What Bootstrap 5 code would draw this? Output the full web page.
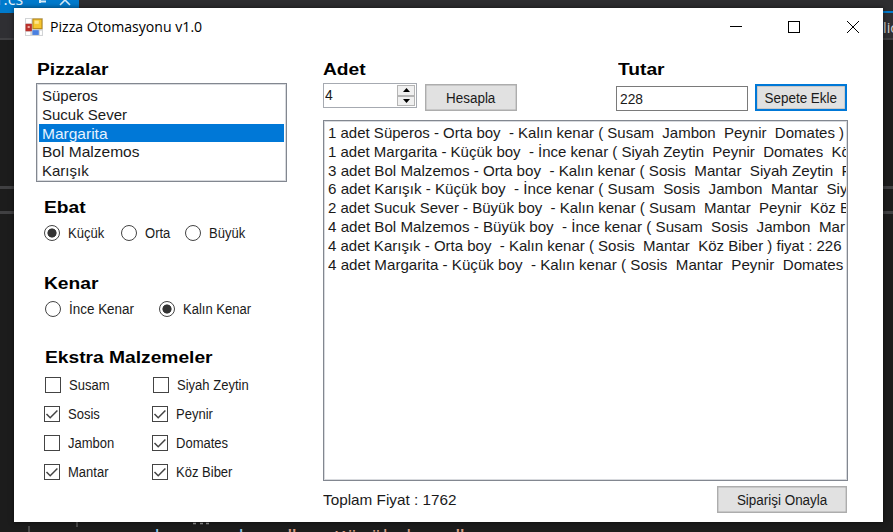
<!DOCTYPE html>
<html lang="tr">
<head>
<meta charset="utf-8">
<title>Pizza Otomasyonu v1.0</title>
<link href="https://cdn.jsdelivr.net/npm/bootstrap@5.3.0/dist/css/bootstrap.min.css" rel="stylesheet">
<style>
body{width:893px;height:532px;background:#1c1c1c;font-family:"Liberation Sans",Arial,sans-serif;font-size:14px;line-height:1;color:#1a1a1a;overflow:hidden}
/* editor behind the window */
.ide{inset:0;overflow:hidden}
.ide-top{height:11px;background:#2d2d30}
.ide-bar{height:27px;background:#2f2f33;border-top:2px solid #007acc;color:#d0d0d0;padding-left:883px;overflow:hidden}
.ide-bar span{font:14.5px/29px "Open Sans",sans-serif}
.ide-rule{height:2px;background:#3f3f42}
.ide-split{height:3px;background:#404042}
.gap-a{height:146px}.gap-b{height:22px}
.ide-tab{left:0;top:0;width:79px;height:13px;background:#007acc;color:#e8f3fb;font:16px/1 "Open Sans",sans-serif}
.ide-tab span{left:-3px;top:-9px}
.ide-tab svg{left:36px;top:0}
.code{left:154px;top:528px;font:20px/22px "Liberation Mono",monospace;color:#8fc8ea;white-space:pre}
.code .str{color:#d69d85}
.guides{left:0;top:522px}
/* window */
.win{left:14px;top:8px;width:869px;height:514px;background:#fff;box-shadow:0 0 5px rgba(0,0,0,.6)}
.title-bar{height:38px;padding:0 24px 0 11px}
.title-txt{font:14.5px/36px "Open Sans","Noto Sans",sans-serif;color:#000;margin-left:7px}
.tx{display:inline-block;white-space:pre;transform-origin:0 50%;transform:scaleX(.93)}
.btn .tx{transform-origin:50% 50%;transform:scaleX(.96)}
.ttl{transform:scaleX(.972)}
.hd{font-weight:700;font-size:16px;line-height:27px;height:26px;margin:0;color:#000}
.hd .tx{transform:scaleX(1.2)}
.left-col{width:286px;padding:10px 0 0 22px}
.left-col .hd.first{padding-left:1px}
.right-col{width:526px;padding-top:10px;margin-left:23px}
.lbox{border:1px solid #828790;box-shadow:inset 0 0 0 1px #d8dade;background:#fff;border-radius:0;overflow:hidden}
.lbox .list-group-item{border:0;margin:0;padding:0 0 0 3px;height:18.8px;line-height:20px;font-size:15px;color:#1a1a1a;background:transparent;white-space:pre;overflow-x:clip}
.lbox .list-group-item.active{background:#0078d7;color:#e6f2ff;margin:0}
.pizza{width:251px;height:99px;padding:2px 2px 0;margin-top:1px}
.orders{width:525px;height:361px;padding:2px 1px 0 1px;margin-top:9px}
.pizza .tx,.orders .tx{transform:none}
.pizza .wide .tx{transform:scaleX(1.035)}
.orders .wide .tx{transform:scaleX(1.01)}
.grp{padding:12px 0 0 8px}
.opt{height:20px;margin-top:3px}
.hd-kenar{margin-top:27px}.hd-extra{margin-top:25px}
.opt .form-check-input,.opt-c .form-check-input{width:16px;height:16px;margin:0;border:1px solid #444;box-shadow:none;background-color:#fff;flex:none}
.opt .form-check-input:checked{background-image:radial-gradient(circle,#333 0 4.2px,transparent 4.9px);background-size:auto}
.opt-c .form-check-input{border-radius:0}
.opt-c .form-check-input:checked{background-image:url("data:image/svg+xml,%3csvg xmlns='http://www.w3.org/2000/svg' viewBox='0 0 14 14'%3e%3cpath fill='none' stroke='%23444' stroke-width='1.5' d='M1.5 7l3.7 3.7L12.4 3.5'/%3e%3c/svg%3e")}
.opt label,.opt-c label{margin-left:8px;line-height:20px}
.o1{width:77px}.o2{width:64px}.o3{width:70px}.k1{width:114px}
.k1 .tx{transform:scaleX(.96)}
.extras{display:grid;grid-template-columns:107.5px 110px;grid-auto-rows:28.8px;margin-top:1px}
.shift{padding-left:1px}
.heads .hd:first-child{width:295px}
.controls{height:29px}
.wbtn{border:1px solid #adadad;border-radius:0;background:#e1e1e1;color:#1a1a1a;padding:0;font-size:14px;line-height:26px;height:27px;width:92px;box-shadow:inset 0 0 0 .4px #adadad}
.wbtn.focus-btn{border:2px solid #0078d7;line-height:24px;margin-left:7px}
.wbtn.calc{margin-left:8px}
.wbtn.confirm{width:130px}
.spin{width:94px;height:25px;border:1px solid #a6aab1;padding:1px;margin-top:1px}
.spin .tx{line-height:20px;font-size:15px}
.spin-b{width:18px;height:10.5px;background:#f0f0f0;border:1px solid #b5b5b5}
.tbox{width:132px;height:25px;border:1px solid #7a7a7a;padding-left:3px;line-height:23px;font-size:15px;margin-left:99px}
.tbox .tx{transform:scaleX(.92)}
.foot{width:524px;padding-top:5px}
.total{font-size:15px;line-height:27px;transform:scaleX(1.02)}
</style>
</head>
<body>
<div class="ide position-absolute">
  <div class="ide-top"></div>
  <div class="ide-bar"><span>lic</span></div>
  <div class="ide-rule"></div>
  <div class="gap-a"></div><div class="ide-split"></div>
  <div class="gap-b"></div><div class="ide-split"></div>
  <div class="ide-tab position-absolute overflow-hidden"><span class="position-absolute">r.cs</span>
    <svg class="position-absolute" width="40" height="6"><path d="M4 0v3M4 1.5h6" stroke="#d6eaf7" stroke-width="2"/><path d="M24 5l5-5 5 5" fill="none" stroke="#d6eaf7" stroke-width="1.6"/></svg>
  </div>
  <svg class="guides position-absolute" width="220" height="10"><path d="M29 4v6M77 0v5" stroke="#777" stroke-width="1"/><path d="M193 1.500h3M200 1.500h3M206 1.500h3" stroke="#999" stroke-width="1.500"/></svg>
  <div class="code position-absolute">kenar_ek = <span class="str">" - Küçük boy "</span></div>
</div>

<main class="win position-absolute d-flex flex-column">
  <header class="title-bar d-flex align-items-center">
    <svg width="18" height="18" viewBox="0 0 17 17"><rect width="17" height="17" fill="#d2d4d6"/><path d="M1 1h5v4H1zM1 13h4v3H1z" fill="#fff"/><rect x=".5" y="5.500" width="6" height="7" fill="#b92f2a"/><rect x="2.500" y="7.500" width="2" height="2" fill="#f0a8a0"/><rect x="7.500" y="1" width="8.500" height="9" fill="#f5c52f" stroke="#b98a16"/><rect x="9" y="2.500" width="4" height="3" fill="#fde48a"/><rect x="7" y="11.500" width="6" height="4.500" fill="#4a80e0"/><path d="M14 12h2v4h-2z" fill="#fff"/></svg>
    <span class="title-txt tx ttl me-auto">Pizza Otomasyonu v1.0</span>
    <svg width="133" height="14" viewBox="0 0 133 14" fill="none" stroke="#000" shape-rendering="crispEdges"><path d="M4 6.500h12"/><rect x="62.500" y="1.500" width="11" height="11"/><path d="M121 1l12 12M133 1l-12 12" shape-rendering="auto"/></svg>
  </header>

  <div class="d-flex">
    <section class="left-col">
      <h2 class="hd first"><span class="tx">Pizzalar</span></h2>
      <ul class="list-group lbox pizza">
        <li class="list-group-item"><span class="tx">Süperos</span></li>
        <li class="list-group-item"><span class="tx">Sucuk Sever</span></li>
        <li class="list-group-item active wide"><span class="tx">Margarita</span></li>
        <li class="list-group-item wide"><span class="tx">Bol Malzemos</span></li>
        <li class="list-group-item"><span class="tx">Karışık</span></li>
      </ul>
      <div class="grp">
        <h2 class="hd"><span class="tx">Ebat</span></h2>
        <div class="opt d-flex align-items-center">
          <div class="o1 d-flex align-items-center"><input class="form-check-input" type="radio" name="s" id="s1" checked><label for="s1"><span class="tx">Küçük</span></label></div>
          <div class="o2 d-flex align-items-center"><input class="form-check-input" type="radio" name="s" id="s2"><label for="s2"><span class="tx">Orta</span></label></div>
          <div class="o3 d-flex align-items-center"><input class="form-check-input" type="radio" name="s" id="s3"><label for="s3"><span class="tx">Büyük</span></label></div>
        </div>
        <h2 class="hd hd-kenar"><span class="tx">Kenar</span></h2>
        <div class="opt d-flex align-items-center shift">
          <div class="k1 d-flex align-items-center"><input class="form-check-input" type="radio" name="k" id="k1"><label for="k1"><span class="tx">İnce Kenar</span></label></div>
          <div class="d-flex align-items-center"><input class="form-check-input" type="radio" name="k" id="k2" checked><label for="k2"><span class="tx">Kalın Kenar</span></label></div>
        </div>
        <h2 class="hd hd-extra shift"><span class="tx">Ekstra Malzemeler</span></h2>
        <div class="extras">
          <div class="opt-c d-flex align-items-center shift"><input class="form-check-input" type="checkbox" id="e1"><label for="e1"><span class="tx">Susam</span></label></div>
          <div class="opt-c d-flex align-items-center shift"><input class="form-check-input" type="checkbox" id="e2"><label for="e2"><span class="tx">Siyah Zeytin</span></label></div>
          <div class="opt-c d-flex align-items-center"><input class="form-check-input" type="checkbox" id="e3" checked><label for="e3"><span class="tx">Sosis</span></label></div>
          <div class="opt-c d-flex align-items-center"><input class="form-check-input" type="checkbox" id="e4" checked><label for="e4"><span class="tx">Peynir</span></label></div>
          <div class="opt-c d-flex align-items-center"><input class="form-check-input" type="checkbox" id="e5"><label for="e5"><span class="tx">Jambon</span></label></div>
          <div class="opt-c d-flex align-items-center"><input class="form-check-input" type="checkbox" id="e6" checked><label for="e6"><span class="tx">Domates</span></label></div>
          <div class="opt-c d-flex align-items-center"><input class="form-check-input" type="checkbox" id="e7" checked><label for="e7"><span class="tx">Mantar</span></label></div>
          <div class="opt-c d-flex align-items-center"><input class="form-check-input" type="checkbox" id="e8" checked><label for="e8"><span class="tx">Köz Biber</span></label></div>
        </div>
      </div>
    </section>

    <section class="right-col">
      <div class="heads d-flex"><h2 class="hd"><span class="tx">Adet</span></h2><h2 class="hd"><span class="tx">Tutar</span></h2></div>
      <div class="controls d-flex align-items-end">
        <div class="spin d-flex justify-content-between align-self-start"><span class="tx">4</span>
          <div class="d-flex flex-column">
            <div class="spin-b d-flex justify-content-center align-items-center"><svg width="7" height="4"><path d="M0 4L3.500 0 7 4z"/></svg></div>
            <div class="spin-b d-flex justify-content-center align-items-center"><svg width="7" height="4"><path d="M0 0L3.500 4 7 0z"/></svg></div>
          </div>
        </div>
        <button class="btn wbtn calc"><span class="tx">Hesapla</span></button>
        <div class="tbox"><span class="tx">228</span></div>
        <button class="btn wbtn focus-btn"><span class="tx">Sepete Ekle</span></button>
      </div>
      <ul class="list-group lbox orders">
        <li class="list-group-item"><span class="tx">1 adet Süperos - Orta boy  - Kalın kenar ( Susam  Jambon  Peynir  Domates )</span></li>
        <li class="list-group-item"><span class="tx">1 adet Margarita - Küçük boy  - İnce kenar ( Siyah Zeytin  Peynir  Domates  Kö</span></li>
        <li class="list-group-item wide"><span class="tx">3 adet Bol Malzemos - Orta boy  - Kalın kenar ( Sosis  Mantar  Siyah Zeytin  P</span></li>
        <li class="list-group-item wide"><span class="tx">6 adet Karışık - Küçük boy  - İnce kenar ( Susam  Sosis  Jambon  Mantar  Siy</span></li>
        <li class="list-group-item"><span class="tx">2 adet Sucuk Sever - Büyük boy  - Kalın kenar ( Susam  Mantar  Peynir  Köz B</span></li>
        <li class="list-group-item wide"><span class="tx">4 adet Bol Malzemos - Büyük boy  - İnce kenar ( Susam  Sosis  Jambon  Mar</span></li>
        <li class="list-group-item"><span class="tx">4 adet Karışık - Orta boy  - Kalın kenar ( Sosis  Mantar  Köz Biber ) fiyat : 226</span></li>
        <li class="list-group-item wide"><span class="tx">4 adet Margarita - Küçük boy  - Kalın kenar ( Sosis  Mantar  Peynir  Domates</span></li>
      </ul>
      <div class="foot d-flex justify-content-between">
        <span class="tx total">Toplam Fiyat : 1762</span>
        <button class="btn wbtn confirm"><span class="tx">Siparişi Onayla</span></button>
      </div>
    </section>
  </div>
</main>
<script src="https://cdn.jsdelivr.net/npm/bootstrap@5.3.0/dist/js/bootstrap.bundle.min.js"></script>
</body>
</html>
